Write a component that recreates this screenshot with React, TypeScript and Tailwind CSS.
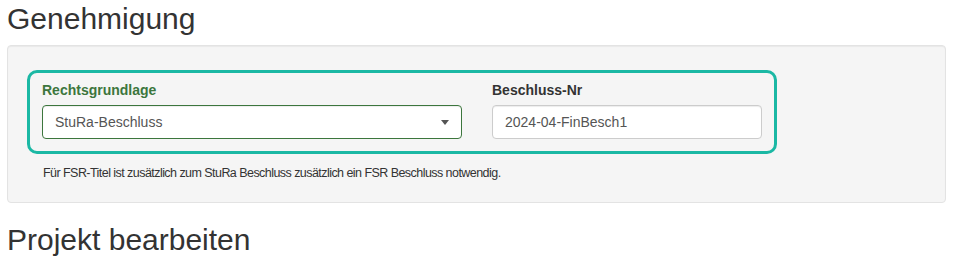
import React from 'react';

const App: React.FC = () => {
  return (
    <div className="min-h-screen bg-white px-[7px] text-[#333]" style={{ fontFamily: '"Liberation Sans", Arial, sans-serif' }}>
      <h2 className="pt-[2px] mb-[10px] text-[30px] leading-[33px] font-normal">Genehmigung</h2>

      {/* Well */}
      <div className="rounded-[4px] border border-[#e3e3e3] bg-[#f5f5f5] pl-[19px] pt-[24px] pb-[20px] shadow-[inset_0_1px_1px_rgba(0,0,0,0.05)]">
        <div className="flex w-[750px] rounded-[10px] border-[3px] border-[#1bb8a4] px-[12px] pt-[7px] pb-[12px]">
          <div className="w-[420px]">
            <label className="mb-[5px] block text-[14px] leading-[20px] font-bold text-[#3c763d]">Rechtsgrundlage</label>
            <div className="relative flex h-[34px] items-center rounded-[4px] border border-[#3c763d] bg-white pl-[12px] text-[14px] text-[#555] shadow-[inset_0_1px_1px_rgba(0,0,0,0.075)]">
              StuRa-Beschluss
              <svg className="absolute right-[12px] top-[14px]" width="8" height="5" viewBox="0 0 8 5">
                <path d="M0 0 L8 0 L4 5 Z" fill="#555" />
              </svg>
            </div>
          </div>
          <div className="ml-[30px] w-[270px]">
            <label className="mb-[5px] block text-[14px] leading-[20px] font-bold text-[#333]">Beschluss-Nr</label>
            <div className="flex h-[34px] items-center rounded-[4px] border border-[#ccc] bg-white pl-[12px] text-[14px] text-[#555] shadow-[inset_0_1px_1px_rgba(0,0,0,0.075)]">
              2024-04-FinBesch1
            </div>
          </div>
        </div>
        <p className="mt-[10px] pl-[16px] text-[12.5px] leading-[18px] tracking-[-0.55px] text-[#333]">
          Für FSR-Titel ist zusätzlich zum StuRa Beschluss zusätzlich ein FSR Beschluss notwendig.
        </p>
      </div>

      <h2 className="mt-[20px] text-[30px] leading-[33px] font-normal">Projekt bearbeiten</h2>
    </div>
  );
};

export default App;
